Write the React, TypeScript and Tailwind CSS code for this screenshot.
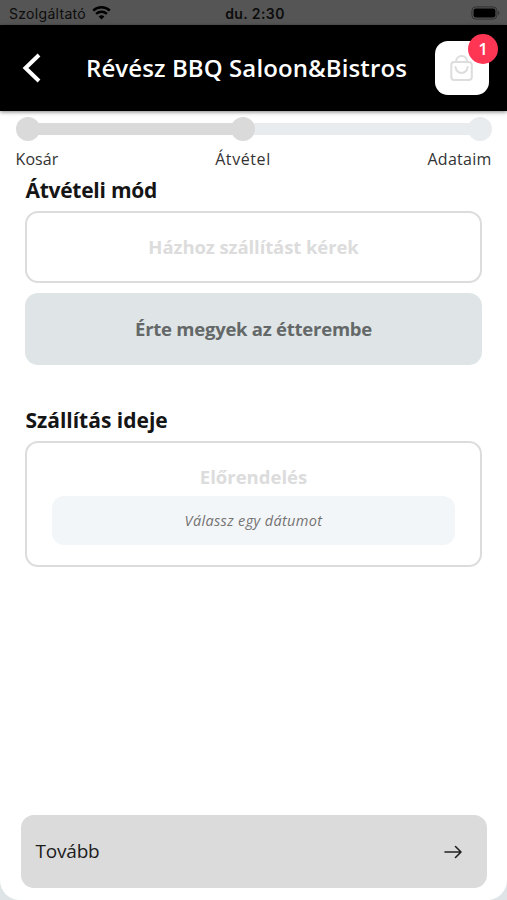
const STEPS = [
  { label: 'Kosár', cls: 'tracking-[0.1px]' },
  { label: 'Átvétel', cls: 'tracking-[0.6px]' },
  { label: 'Adataim', cls: 'tracking-[0.25px]' },
]

function StatusBar() {
  return (
    <div className="flex h-[25px] flex-shrink-0 items-center justify-between bg-[#555555] pl-[9px] pr-[6px] pt-[3px] font-['Inter',sans-serif] text-[14px] leading-none text-[#0c0c0c]">
      <div className="flex flex-1 items-center gap-[6px]">
        <span className="whitespace-nowrap tracking-[0.3px]">Szolgáltató</span>
        <svg width="19" height="14" viewBox="0 0 19 14" fill="none" stroke="#000" className="-mt-[2px]">
          <path d="M1.2 4.7a12 12 0 0 1 16.6 0" strokeWidth="2.5" />
          <path d="M4.1 7.9a7.8 7.8 0 0 1 10.8 0" strokeWidth="2.3" />
          <path d="M6.6 10.6a4.2 4.2 0 0 1 5.8 0L9.5 13.6Z" fill="#000" stroke="none" />
        </svg>
      </div>
      <span className="font-semibold tracking-[0.4px]">du. 2:30</span>
      <div className="flex flex-1 justify-end">
        <svg width="30" height="14" viewBox="0 0 30 14" className="-mt-[3px]">
          <rect x="0.9" y="0.9" width="25" height="12.2" rx="3.8" fill="none" stroke="#303030" strokeWidth="1" />
          <rect x="2.6" y="2.6" width="21.8" height="8.8" rx="2.2" fill="#000" />
          <path d="M27.2 4.8c1.6.6 1.6 3.8 0 4.4z" fill="#303030" />
        </svg>
      </div>
    </div>
  )
}

function Header() {
  return (
    <header className="relative z-10 flex h-[86px] flex-shrink-0 items-center bg-black pl-[22px] pr-[18px] text-white shadow-[0_1px_4px_rgba(0,0,0,0.5)]">
      <svg width="20" height="30" viewBox="0 0 20 30" fill="none" stroke="currentColor" strokeWidth="4">
        <path d="M17 2 3.5 15 17 28" />
      </svg>
      <h1 className="ml-[44px] flex-1 whitespace-nowrap text-[24px] font-semibold leading-8 tracking-[0.1px]">Révész BBQ Saloon&amp;Bistros</h1>
      <div className="relative flex size-[54px] items-center justify-center rounded-[13px] bg-white">
        <svg width="24" height="28" viewBox="0 0 24 28" fill="none" stroke="#dddddd" strokeWidth="2" strokeLinecap="round">
          <rect x="1.3" y="8" width="20.5" height="18" rx="3" />
          <path d="M6 8C6 4.3 8.4 2 11.6 2S17.2 4.3 17.2 8" />
          <path d="M5.5 13c.6 3.6 3 5.9 6.1 5.9s5.500-2.300 6.100-5.900" />
        </svg>
        <span className="absolute -right-[9px] -top-[7px] flex size-[30px] items-center justify-center rounded-full bg-[#ff3653] text-[17px] font-semibold">1</span>
      </div>
    </header>
  )
}

function Stepper() {
  return (
    <div className="px-[15.5px] pt-[6px]">
      <div className="flex h-6 items-center">
        <span className="size-6 rounded-full bg-[#dadada]" />
        <span className="-mx-1 h-3 w-[199px] bg-[#dadada]" />
        <span className="z-[1] size-6 rounded-full bg-[#dadada]" />
        <span className="-mx-1 h-3 flex-1 bg-[#e8ecee]" />
        <span className="size-6 rounded-full bg-[#e8ecee]" />
      </div>
      <div className="mt-[7px] flex justify-between text-[16px] leading-[22px] text-[#333]">
        {STEPS.map(s => <span key={s.label} className={s.cls}>{s.label}</span>)}
      </div>
    </div>
  )
}

export default function App() {
  return (
    <div className="h-[900px] w-[507px] overflow-hidden bg-[#dfe5e7] font-['Open_Sans','Noto_Sans',sans-serif]">
      <div className="flex h-full flex-col overflow-hidden rounded-b-[20px] bg-white">
        <StatusBar />
        <Header />
        <Stepper />

        <main className="flex-1 px-[25.4px]">
          <h2 className="mt-[6px] text-[21px] font-bold leading-[28px] tracking-[-0.25px] text-[#151515]">Átvételi mód</h2>
          <button className="mt-[7px] flex h-[72px] w-full items-center justify-center rounded-[13px] border-2 border-[#dcdcdc] text-[18.5px] font-bold tracking-[-0.1px] text-[#dcdcdc]">
            Házhoz szállítást kérek
          </button>
          <button className="mt-[10px] flex h-[72px] w-full items-center justify-center rounded-[13px] bg-[#dfe5e7] text-[18.5px] font-bold tracking-[-0.25px] text-[#646868]">
            Érte megyek az étterembe
          </button>

          <h2 className="mt-[41px] text-[21px] font-bold leading-[28px] text-[#151515]">Szállítás ideje</h2>
          <div className="mt-[7px] h-[126px] rounded-[13px] border-2 border-[#dcdcdc] px-[25px] pt-[20px] text-center">
            <p className="text-[18.5px] font-bold leading-[28px] text-[#dcdcdc]">Előrendelés</p>
            <div className="mt-[5px] flex h-[49px] items-center justify-center rounded-[12px] bg-[#f3f6f8] text-[14.5px] italic tracking-[0.35px] text-[#737373]">
              Válassz egy dátumot
            </div>
          </div>
        </main>

        <footer className="px-[20.5px] pb-[12px]">
          <button className="flex h-[73px] w-full items-center justify-between rounded-[13px] bg-[#dbdbdb] pl-[15px] pr-[24px] text-[19px] text-[#1c1c1c]">
            <span className="tracking-[-0.2px]">Tovább</span>
            <svg width="20" height="16" viewBox="0 0 20 16" fill="none" stroke="#222" strokeWidth="1.6" strokeLinecap="round" strokeLinejoin="round">
              <path d="M2 8H18M12.5 2.5 18 8 12.5 13.5" />
            </svg>
          </button>
        </footer>
      </div>
    </div>
  )
}
